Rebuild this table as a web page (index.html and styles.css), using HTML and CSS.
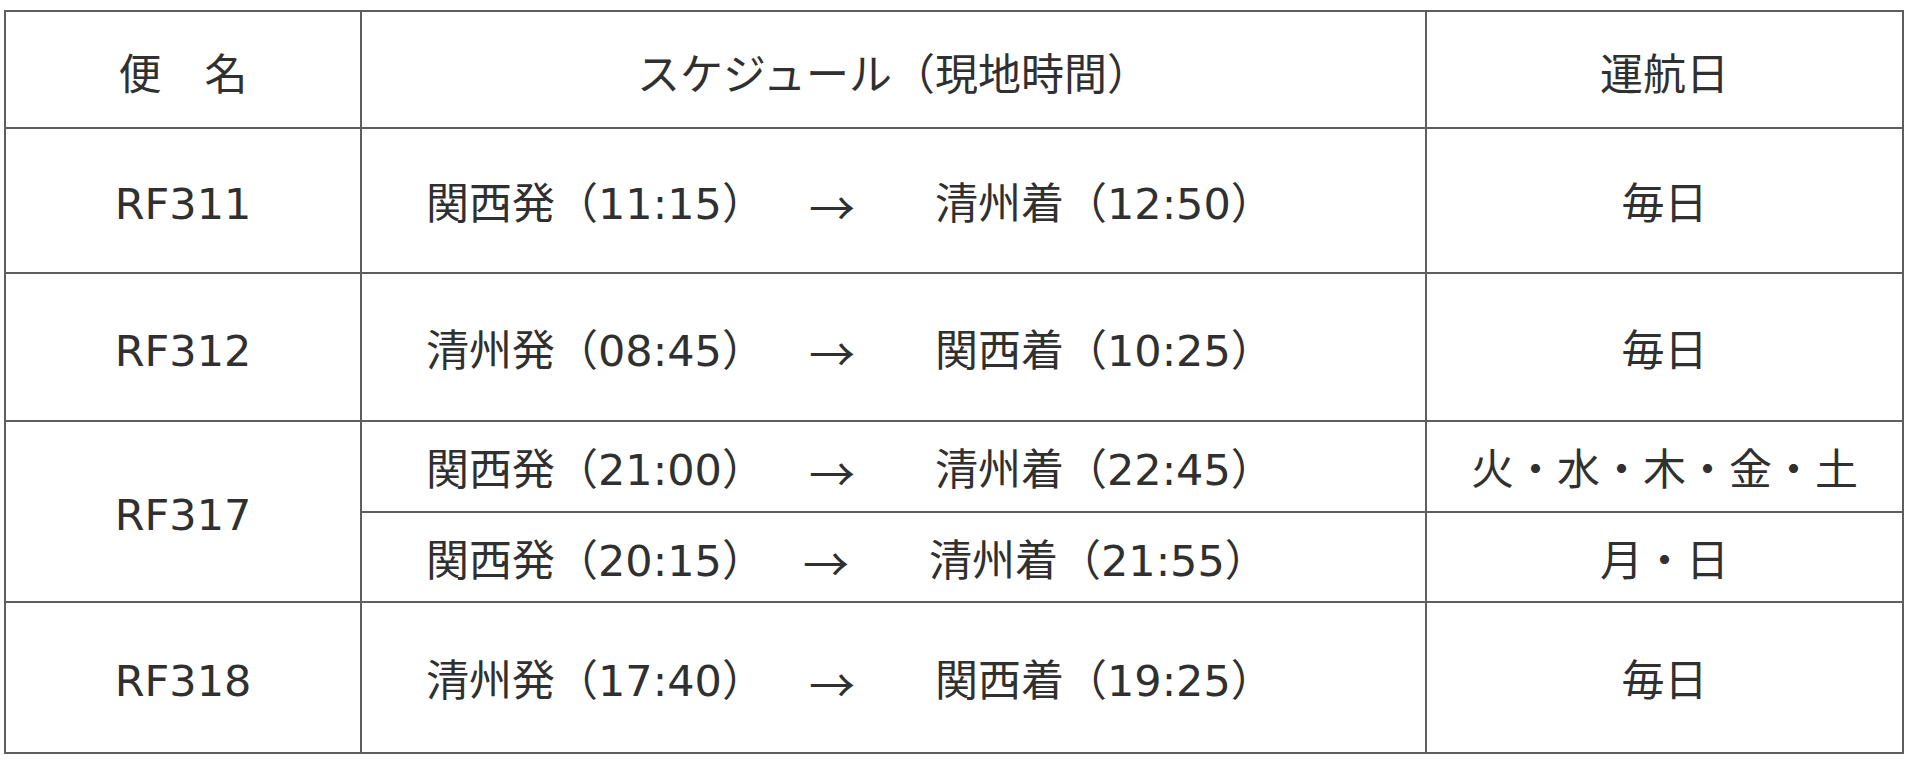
FILE: index.html
```html
<!DOCTYPE html>
<html lang="ja">
<head>
<meta charset="utf-8">
<title>運航スケジュール</title>
<link rel="stylesheet" href="styles.css">
</head>
<body>
<table class="schedule">
  <colgroup>
    <col class="col-flight">
    <col class="col-time">
    <col class="col-days">
  </colgroup>
  <thead>
    <tr class="row-head">
      <th>便　名</th>
      <th>スケジュール（現地時間）</th>
      <th>運航日</th>
    </tr>
  </thead>
  <tbody>
    <tr class="row-a">
      <td>RF311</td>
      <td class="route"><div class="leg"><span class="dep">関西発（11:15）</span><span class="arrow">→</span><span class="arr">清州着（12:50）</span></div></td>
      <td>毎日</td>
    </tr>
    <tr class="row-b">
      <td>RF312</td>
      <td class="route"><div class="leg"><span class="dep">清州発（08:45）</span><span class="arrow">→</span><span class="arr">関西着（10:25）</span></div></td>
      <td>毎日</td>
    </tr>
    <tr class="row-sub1">
      <td rowspan="2">RF317</td>
      <td class="route"><div class="leg"><span class="dep">関西発（21:00）</span><span class="arrow">→</span><span class="arr">清州着（22:45）</span></div></td>
      <td>火・水・木・金・土</td>
    </tr>
    <tr class="row-sub2">
      <td class="route"><div class="leg leg-tight"><span class="dep">関西発（20:15）</span><span class="arrow">→</span><span class="arr">清州着（21:55）</span></div></td>
      <td>月・日</td>
    </tr>
    <tr class="row-c">
      <td>RF318</td>
      <td class="route"><div class="leg"><span class="dep">清州発（17:40）</span><span class="arrow">→</span><span class="arr">関西着（19:25）</span></div></td>
      <td>毎日</td>
    </tr>
  </tbody>
</table>
</body>
</html>
```
FILE: styles.css
```css
html, body {
  margin: 0;
  padding: 0;
  background: #ffffff;
}

body {
  font-family: "DejaVu Sans", "Noto Sans CJK JP", sans-serif;
  color: #303030;
}

.schedule {
  margin: 10px 0 0 4px;
  width: 1898px;
  border-collapse: collapse;
  table-layout: fixed;
  font-size: 43px;
  line-height: 1;
}

.col-flight { width: 356px; }
.col-time { width: 1065px; }
.col-days { width: 477px; }

.schedule th,
.schedule td {
  border: 2px solid #5e5e5e;
  padding: 8px 0 0;
  text-align: center;
  vertical-align: middle;
  font-weight: 400;
  white-space: nowrap;
}

.schedule th {
  padding-top: 12px;
}

.row-head { height: 117px; }
.row-a { height: 145px; }
.row-b { height: 148px; }
.row-sub1 { height: 91px; }
.row-sub2 { height: 90px; }
.row-c { height: 151px; }

.schedule td.route {
  text-align: left;
}

.leg {
  display: flex;
  align-items: center;
  padding-left: 64px;
}

.arrow {
  font-family: "Noto Sans CJK JP", sans-serif;
  font-size: 46px;
  margin-left: 44px;
  margin-right: 80px;
}

.leg-tight .arrow {
  margin-left: 38px;
  margin-right: 80px;
}
```
